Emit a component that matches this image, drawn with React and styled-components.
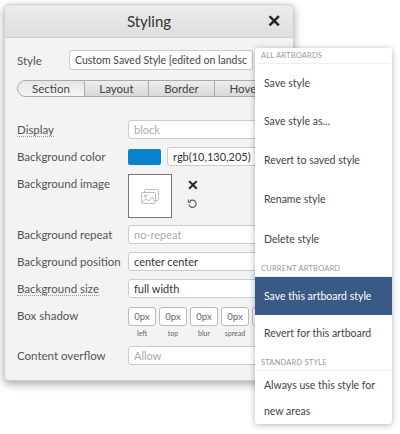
import React from 'react';
import styled, { createGlobalStyle } from 'styled-components';

const Global = createGlobalStyle`
  body { margin: 0; background: #fff; font-family: Lato, "Open Sans", sans-serif; }
`;

const Page = styled.div`
  position: relative;
  width: 400px;
  height: 434px;
  overflow: hidden;
  padding: 4px 0 0 4px;
  box-sizing: border-box;
`;

const Dialog = styled.div`
  width: 290px;
  height: 377px;
  background: #f3f3f3;
  border: 1px solid #cfcfcf;
  border-radius: 5px;
  box-shadow: 0 3px 8px rgba(0,0,0,0.35);
  overflow: hidden;
  box-sizing: border-box;
`;

const Header = styled.div`
  height: 32px;
  background: linear-gradient(#ececec, #dedede);
  border-bottom: 1px solid #cfcfcf;
  display: flex;
  align-items: center;
  justify-content: center;
  position: relative;
  font-size: 15px;
  color: #333;
`;

const Close = styled.span`
  position: absolute;
  left: 262px;
  top: 5px;
  font-size: 17px;
  font-weight: bold;
  color: #222;
`;

const Body = styled.div`
  padding: 12px 12px 0 12px;
`;

const Row = styled.div`
  display: flex;
  align-items: ${p => (p.$top ? 'flex-start' : 'center')};
  height: ${p => p.$h || 27}px;
  flex-shrink: 0;
`;

const Label = styled.span`
  width: ${p => p.$w || 111}px;
  flex-shrink: 0;
  font-size: 11.5px;
  color: #555;
  margin-top: ${p => p.$mt || 0}px;
  span { border-bottom: ${p => (p.$dotted ? '1px dotted #999' : 'none')}; }
`;

const Select = styled.div`
  width: 172px;
  height: 18px;
  background: #fff;
  border: 1px solid #ccc;
  border-radius: 3px;
  font-size: 10.5px;
  color: #444;
  display: flex;
  align-items: center;
  justify-content: space-between;
  padding: 0 5px;
  white-space: nowrap;
  overflow: hidden;
`;

const Tabs = styled.div`
  display: flex;
  margin: 10px 0 19px 0;
  height: 17px;
`;

const Tab = styled.div`
  width: ${p => p.$w}px;
  border: 1px solid #aaa;
  border-left: ${p => (p.$first ? '1px solid #aaa' : 'none')};
  border-radius: ${p => (p.$first ? '9px 0 0 9px' : '0')};
  background: ${p => (p.$active ? 'linear-gradient(#e6e6e6,#f6f6f6)' : 'linear-gradient(#eee,#d9d9d9)')};
  font-size: 11.5px;
  color: #444;
  display: flex;
  align-items: center;
  justify-content: center;
  flex-shrink: 0;
`;

const Input = styled.div`
  flex: 1;
  height: 17px;
  background: #fff;
  border: 1px solid #ccc;
  border-radius: 3px;
  font-size: 11px;
  color: ${p => (p.$muted ? '#aaa' : '#333')};
  display: flex;
  align-items: center;
  padding: 0 5px;
`;

const Swatch = styled.div`
  width: 33px;
  height: 16px;
  background: rgb(10,130,205);
  border-radius: 2px;
  margin-right: 6px;
  flex-shrink: 0;
`;

const ImageBox = styled.div`
  width: 42px;
  height: 42px;
  background: #fff;
  border: 1px solid #777;
  display: flex;
  align-items: center;
  justify-content: center;
  margin-top: 4px;
  flex-shrink: 0;
`;

const ImageActions = styled.div`
  display: flex;
  flex-direction: column;
  margin-left: 15px;
  margin-top: 6px;
  gap: 5px;
  color: #222;
  font-size: 14px;
  font-weight: bold;
`;

const Shadow = styled.div`
  display: flex;
  gap: 3px;
  margin-top: 5px;
`;

const ShadowField = styled.div`
  display: flex;
  flex-direction: column;
  align-items: center;
  font-size: 7px;
  color: #666;
  gap: 3px;
`;

const ShadowBox = styled.div`
  width: 26px;
  height: 17px;
  background: #fff;
  border: 1px solid #bbb;
  border-radius: 3px;
  font-size: 9.5px;
  color: #666;
  display: flex;
  align-items: center;
  justify-content: center;
`;

const Menu = styled.div`
  position: absolute;
  left: 255px;
  top: 48px;
  width: 137px;
  height: 376px;
  background: #fff;
  border-radius: 3px;
  box-shadow: 0 1px 6px rgba(0,0,0,0.3);
  display: flex;
  flex-direction: column;
`;

const Section = styled.div`
  font-size: 7.5px;
  color: #999;
  letter-spacing: 0.2px;
  padding: ${p => (p.$first ? '3px' : '6px')} 4px 3px;
  margin: 0 2px;
  border-bottom: 1px solid #eee;
`;

const Item = styled.div`
  height: ${p => p.$h || 40}px;
  display: flex;
  align-items: center;
  padding: 0 9px;
  font-size: 10.5px;
  color: ${p => (p.$active ? '#fff' : '#444')};
  background: ${p => (p.$active ? '#3a5a85' : 'transparent')};
  line-height: 26px;
`;

const ImgIcon = () => (
  <svg width="18" height="15" viewBox="0 0 18 15" fill="none" stroke="#bbb" strokeWidth="1">
    <rect x="3.5" y="0.5" width="14" height="11" rx="1" />
    <rect x="0.5" y="3.5" width="14" height="11" rx="1" fill="#fff" />
    <circle cx="4.5" cy="7" r="1.3" />
    <path d="M1 13l4-3 3 2 3-4 3 5" />
  </svg>
);

export default function App() {
  return (
    <Page>
      <Global />
      <Dialog>
        <Header>
          Styling
          <Close>✕</Close>
        </Header>
        <Body>
          <Row $h={20}>
            <Label $w={52}>Style</Label>
            <Select>
              <span>Custom Saved Style [edited on landsc</span>
              <svg width="8" height="6" viewBox="0 0 8 6"><path d="M1 1l3 3 3-3" stroke="#555" fill="none" /></svg>
            </Select>
          </Row>
          <Tabs>
            <Tab $first $active $w={66}>Section</Tab>
            <Tab $w={63}>Layout</Tab>
            <Tab $w={65}>Border</Tab>
            <Tab $w={60}>Hover</Tab>
          </Tabs>
          <Row><Label $dotted><span>Display</span></Label><Input $muted>block</Input></Row>
          <Row><Label>Background color</Label><Swatch /><Input>rgb(10,130,205)</Input></Row>
          <Row $h={51} $top>
            <Label $mt={7}>Background image</Label>
            <ImageBox><ImgIcon /></ImageBox>
            <ImageActions>
              <span>✕</span>
              <svg width="11" height="11" viewBox="0 0 12 12" fill="none" stroke="#666" strokeWidth="1.3">
                <path d="M3 3.5A4 4 0 1 1 2 7" />
                <path d="M1.5 1.5v3h3" />
              </svg>
            </ImageActions>
          </Row>
          <Row><Label>Background repeat</Label><Input $muted>no-repeat</Input></Row>
          <Row><Label>Background position</Label><Input>center center</Input></Row>
          <Row><Label $dotted><span>Background size</span></Label><Input>full width</Input></Row>
          <Row $h={40} $top>
            <Label $mt={7}>Box shadow</Label>
            <Shadow>
              {['left', 'top', 'blur', 'spread', 'color'].map(l => (
                <ShadowField key={l}><ShadowBox>0px</ShadowBox>{l}</ShadowField>
              ))}
            </Shadow>
          </Row>
          <Row><Label>Content overflow</Label><Input $muted>Allow</Input></Row>
        </Body>
      </Dialog>
      <Menu>
        <Section $first>ALL ARTBOARDS</Section>
        <Item $h={38}>Save style</Item>
        <Item>Save style as...</Item>
        <Item>Revert to saved style</Item>
        <Item>Rename style</Item>
        <Item>Delete style</Item>
        <Section>CURRENT ARTBOARD</Section>
        <Item $active $h={38}>Save this artboard style</Item>
        <Item $h={38}>Revert for this artboard</Item>
        <Section>STANDARD STYLE</Section>
        <Item $h={54}>Always use this style for new areas</Item>
      </Menu>
    </Page>
  );
}
